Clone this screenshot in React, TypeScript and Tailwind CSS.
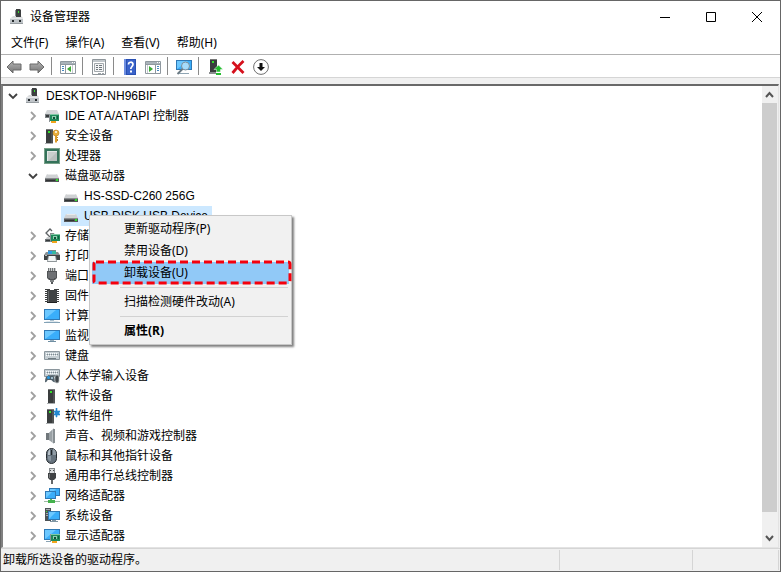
import type { ReactNode } from "react";

const S = ({ children, size = 16 }: { children: ReactNode; size?: number }) => (
  <svg width={size} height={size} viewBox="0 0 16 16" fill="none" aria-hidden="true" className="shrink-0">
    {children}
  </svg>
);

/* ---------- shared drawing parts ---------- */

const Card = ({ x, y }: { x: number; y: number }) => (
  <g transform={`translate(${x} ${y})`}>
    <path d="M0 0h1v8H0z" fill="#8b9396" />
    <path d="M1 0h9v7H1z" fill="#1f8a5b" />
    <path d="M1 0h9v1H1z" fill="#7fc9a4" />
    <path d="M3 2h4v3H3z" fill="#8fcfb0" />
    <path d="M4 3h2v2H4z" fill="#0f4f36" />
    <path d="M8 2h1v3H8z" fill="#0f5f40" />
    <path d="M2 7h5v2H2z" fill="#f0a51c" />
  </g>
);

const Screen = ({ x, y, w, h }: { x: number; y: number; w: number; h: number }) => (
  <g>
    <rect x={x} y={y} width={w} height={h} fill="#2f79b5" />
    <rect x={x + 1} y={y + 1} width={w - 2} height={h - 2} fill="#3aaefa" />
    <path d={`M${x + 1} ${y + h - 1}L${x + w - 4} ${y + 1}H${x + 1}z`} fill="#6cc8ff" />
  </g>
);

const Tower = ({ x, y, h = 14 }: { x: number; y: number; h?: number }) => (
  <g>
    <rect x={x} y={y} width="7" height={h} fill="#3a3d3e" />
    <rect x={x} y={y} width="7" height="1" fill="#77797a" />
    <rect x={x + 5} y={y + 1} width="2" height={h - 1} fill="#505354" />
    <rect x={x + 2} y={y + 2} width="2" height="2" fill="#35e02b" />
    <rect x={x - 1} y={y + h} width="8" height="1" fill="#aaaeb0" />
  </g>
);

const Keys = ({ y, h }: { y: number; h: number }) => (
  <g>
    <rect x="0" y={y} width="16" height={h} rx="1" fill="#8b969d" />
    <rect x="1" y={y + 1} width="14" height={h - 2} fill="#c5ced3" />
    <path
      d={`M2 ${y + 2.5}h12M2 ${y + 4.5}h12`}
      stroke="#f8fafb"
      strokeWidth="1"
      strokeDasharray="1 1"
    />
    <path d={`M3 ${y + 3.5}h11`} stroke="#7c888f" strokeWidth="1" strokeDasharray="1 1" />
    <path d={`M4 ${y + h - 1.5}h8`} stroke="#6f7b82" strokeWidth="1" />
  </g>
);

/* ---------- device icons ---------- */

const ComputerRoot = () => (
  <S>
    <path d="M7 0h4l1 1v8H7z" fill="#3c3f40" />
    <path d="M6 1h1v8H6z" fill="#8e9293" />
    <path d="M9 2h1v2H9z" fill="#36e22b" />
    <path d="M2 9l2-2h8l2 2z" fill="#dadcdd" />
    <path d="M7 1h5v7H7z" fill="#3c3f40" />
    <path d="M9 2h1v2H9z" fill="#36e22b" />
    <path d="M1 9h13v6H1z" fill="#bfc4c8" />
    <path d="M1 9h13v1H1z" fill="#e6e8ea" />
    <path d="M3 11h2v2H3zM10 11h2v2h-2z" fill="#24292c" />
    <path d="M1 14h13v1H1z" fill="#979da1" />
  </S>
);

const IdeIcon = () => (
  <S>
    <path d="M3 2h10l2 4H1z" fill="#d3d6d8" />
    <path d="M1 6h14v4H1z" fill="#7c8285" />
    <path d="M2 7h4v2H2z" fill="#363a3c" />
    <Card x={5} y={6} />
  </S>
);

const SecurityIcon = () => (
  <S>
    <Tower x={2} y={1} h={14} />
    <circle cx="12" cy="5" r="3" fill="#e9ae3c" stroke="#b87e1d" strokeWidth=".6" />
    <circle cx="12" cy="4" r="1" fill="#fff" />
    <path d="M11 7h2v7l-1 1-1-1z" fill="#dd9d29" />
    <path d="M13 9h1v1h-1zM13 11h1v2h-1z" fill="#b87e1d" />
  </S>
);

const CpuIcon = () => (
  <S>
    <path d="M0 0h16v16H0z" fill="#34725a" />
    <path d="M.5.5h15v15H.5z" stroke="#b9cfb4" strokeDasharray="1 1" />
    <path d="M3 3h10v10H3z" fill="#e3e7e6" />
    <path d="M4 4h9v9H4z" fill="#c9cfcd" />
    <path d="M4 13L13 4v9z" fill="#b9c0be" />
  </S>
);

const DiskIcon = () => (
  <S>
    <path d="M3 6h10l2 4H1z" fill="#cfd1d3" />
    <path d="M4 6h8l1 1H3z" fill="#e8e9ea" />
    <path d="M1 10h14v4H1z" fill="#55585a" />
    <path d="M1 10h14v1H1z" fill="#888b8d" />
    <path d="M2 12h9v1H2z" fill="#303233" />
    <path d="M12 11h2v2h-2z" fill="#30dd2b" />
  </S>
);

const StorageIcon = () => (
  <S>
    <path d="M8 3L6 1 2 5l4 4 3-3H6" stroke="#5d6265" strokeWidth="1.300" />
    <path d="M3 9h5l2 3H1z" fill="#c9cccd" />
    <path d="M1 11h7v3H1z" fill="#6d7275" />
    <path d="M2 12h4v1H2z" fill="#35393b" />
    <Card x={6} y={6} />
  </S>
);

const PrinterIcon = () => (
  <S>
    <path d="M4 2h8v2H4z" fill="#7d8487" />
    <path d="M2 4h12l2 3H0z" fill="#8a9093" />
    <path d="M4 3h4v3H4z" fill="#2d9be6" />
    <path d="M8 3h4v3H8z" fill="#35b9a0" />
    <path d="M0 7h16v5H0z" fill="#3f4345" />
    <path d="M1 7h2v1H1z" fill="#b9bec0" />
    <path d="M4 8h8l1 6H3z" fill="#8f9699" />
    <path d="M5 8h6l1 5H4z" fill="#f2f5f6" />
  </S>
);

const PortIcon = () => (
  <S>
    <path d="M4 0h8v3H4z" fill="#c9cccd" />
    <path d="M4.500 0v3M6.500 0v3M8.500 0v3M10.500 0v3" stroke="#6f7375" />
    <path d="M3 3h10v7l-2 2H5l-2-2z" fill="#505355" />
    <path d="M5 4v6M7 4v7M9 4v7M11 4v6" stroke="#9da0a2" strokeWidth=".8" />
    <path d="M6 12h4v2H6z" fill="#7f8385" />
    <path d="M7 14h2v2H7z" fill="#55585a" />
  </S>
);

const FirmwareIcon = () => (
  <S>
    <path d="M3 1h3v1h4V1h3v14H3z" fill="#404243" />
    <path d="M2 1v14M14 1v14" stroke="#3d3f40" strokeWidth="2" strokeDasharray="1 1" />
    <path d="M4 3h1v11H4z" fill="#66696b" />
    <path d="M3 14h10v1H3z" fill="#1f2121" />
  </S>
);

const ComputersIcon = () => (
  <S>
    <Screen x={0} y={1} w={16} h={11} />
    <path d="M6 12h4v1H6z" fill="#abc1cf" />
    <path d="M1 14l2-1h10l2 1z" fill="#dce6ec" />
    <path d="M0 14h16v1H0z" fill="#83a2b6" />
  </S>
);

const MonitorIcon = () => (
  <S>
    <Screen x={0} y={2} w={16} h={10} />
    <path d="M6 12h4v1H6z" fill="#9db2bf" />
    <path d="M4 13h8v1H4z" fill="#6f8ea2" />
  </S>
);

const KeyboardIcon = () => (
  <S>
    <Keys y={3} h={9} />
  </S>
);

const HidIcon = () => (
  <S>
    <Keys y={1} h={8} />
    <path d="M1 14c0-5 2-7 4-6h2c3-1 4 2 4 6-2 1-3-2-4-2H4c-1 0-1 3-3 2z" fill="#51616b" />
    <circle cx="4.500" cy="9.500" r="1.500" fill="#2697e0" />
    <circle cx="8" cy="10" r="1" fill="#b9d8e8" />
    <rect x="11" y="7" width="4" height="8" rx="2" fill="#3f464a" stroke="#b3b9bc" strokeWidth=".7" />
  </S>
);

const SoftwareIcon = () => (
  <S>
    <Tower x={4} y={1} h={14} />
  </S>
);

const ComponentIcon = () => (
  <S>
    <Tower x={3} y={1} h={14} />
    <path d="M10 3h2V0h1v3h3v1h-1v2h1v1h-3v2h-1V7h-2V6h1V4h-1z" fill="#2388d1" stroke="#2388d1" strokeWidth=".6" />
  </S>
);

const SoundIcon = () => (
  <S>
    <path d="M2 5h3v7H2z" fill="#70777b" />
    <path d="M5 5l5-5v16l-5-4z" fill="#b8bec2" />
    <path d="M5 5l3-3v12l-3-2z" fill="#9aa1a5" />
    <path d="M9 1h2v14H9z" fill="#878e92" />
  </S>
);

const MouseIcon = () => (
  <S>
    <rect x="2.500" y=".5" width="10" height="15" rx="5" fill="#66727d" stroke="#252b30" />
    <path d="M4 5c0-2 1-3 2-4v6H4z" fill="#b6c0c8" />
    <path d="M9 1c2 0 3 2 3 6H9z" fill="#929da6" />
    <path d="M7 2h1v5H7z" fill="#20262a" />
    <path d="M4 8h3v5c-2 0-3-1-3-3z" fill="#8995a0" />
  </S>
);

const UsbIcon = () => (
  <S>
    <path d="M5 0h6v5H5z" fill="#858a8d" />
    <path d="M6 1h4v4H6z" fill="#d9dcdd" />
    <path d="M6 2h1v1H6zM9 2h1v1H9z" fill="#494d4f" />
    <path d="M4 5h8v5l-2 2H6l-2-2z" fill="#3f4244" />
    <path d="M5 6h1v4H5z" fill="#77797b" />
    <path d="M7 12h2v4H7z" fill="#66696b" />
  </S>
);

const NetworkIcon = () => (
  <S>
    <Screen x={5} y={0} w={11} h={8} />
    <path d="M0 3h12v8H0z" fill="#fff" />
    <Screen x={1} y={3} w={11} h={8} />
    <path d="M6 11h2v2H6z" fill="#5cb861" />
    <path d="M0 13h16v1H0z" fill="#9fb9a5" />
    <path d="M4 12h7v3H4z" fill="#44b24c" />
  </S>
);

const SystemIcon = () => (
  <S>
    <path d="M1 0h6v13H1z" fill="#4d5357" />
    <path d="M2 1h4v1H2zM2 5h3v1H2zM2 7h3v1H2z" fill="#a3a9ad" />
    <path d="M2 3h1v1H2z" fill="#37df2d" />
    <Screen x={4} y={3} w={12} h={9} />
    <path d="M8 12h4v1H8zM6 13h8v1H6z" fill="#8097a5" />
  </S>
);

const AdapterIcon = () => (
  <S>
    <Screen x={0} y={1} w={16} h={11} />
    <path d="M2 13h4v1H2z" fill="#8aa3b3" />
    <Card x={6} y={6} />
  </S>
);

/* ---------- toolbar icons ---------- */

const arrow = "M1 8l6-6v3h8v6H7v3z";
const BackIcon = () => (
  <S>
    <defs>
      <linearGradient id="grey" x1="0" y1="0" x2="0" y2="1">
        <stop offset="0" stopColor="#b5b5b5" />
        <stop offset="1" stopColor="#747474" />
      </linearGradient>
    </defs>
    <path d={arrow} fill="url(#grey)" stroke="#6a6a6a" />
  </S>
);
const ForwardIcon = () => (
  <S>
    <path d={arrow} transform="matrix(-1 0 0 1 16 0)" fill="url(#grey)" stroke="#6a6a6a" />
  </S>
);
const Pane = ({ left }: { left?: boolean }) => (
  <g>
    <path d="M.5 2.500h15v12H.5z" fill="#fff" stroke="#8f989f" />
    <path d="M1 3h14v2H1z" fill="#aab3ba" />
    <path d="M12 3h1v1h-1zM14 3h1v1h-1z" fill="#fff" />
    <path d="M1 5.500h14" stroke="#8f989f" />
    {left ? (
      <>
        <path d="M5.500 6v8" stroke="#8f989f" />
        <path d="M2 7.500h2M2 9.500h2M2 11.500h2" stroke="#4687c0" />
        <path d="M11 7v6L7 10z" fill="#3ba935" />
        <path d="M12.500 6v8" stroke="#c5cbd0" />
      </>
    ) : (
      <>
        <path d="M10.500 6v8" stroke="#8f989f" />
        <path d="M12 7.500h2M12 9.500h2M12 11.500h2" stroke="#4687c0" />
        <path d="M4 7v6l4-3z" fill="#3ba935" />
        <path d="M2.500 6v8" stroke="#c5cbd0" />
      </>
    )}
  </g>
);
const TreePaneIcon = () => (
  <S>
    <Pane left />
  </S>
);
const ActionPaneIcon = () => (
  <S>
    <Pane />
  </S>
);
const PropertiesIcon = () => (
  <S>
    <path d="M1.500.5h13v15h-13z" fill="#fff" stroke="#8e959a" />
    <path d="M2 1h12v2H2z" fill="#c1c7cb" />
    <path d="M3.500 4.500h9v8h-9z" fill="#f4f5f6" stroke="#a3a9ad" />
    <path d="M5 6.500h2M8 6.500h3M5 8.500h2M8 8.500h3M5 10.500h2M8 10.500h3" stroke="#6f777c" />
    <path d="M7 14h3v1H7zM11 14h2v1h-2z" fill="#9da4a9" />
  </S>
);
const HelpIcon = () => (
  <S>
    <path d="M2 0h12v16H2z" fill="#2950b3" />
    <path d="M2 0h2v16H2z" fill="#6f8fe0" />
    <path d="M5 1h8v14H5z" fill="#3a63ca" />
    <path d="M6.500 5.500C6.500 2.500 11 2.500 11 5.300 11 7.500 8.800 7.500 8.800 10" stroke="#fff" strokeWidth="1.700" />
    <path d="M8 11.500h2v2H8z" fill="#fff" />
  </S>
);
const ScanIcon = () => (
  <S>
    <Screen x={0} y={1} w={16} h={10} />
    <path d="M2 14h11v1H2z" fill="#8fa5b3" />
    <circle cx="9.500" cy="7" r="4" fill="#bfe6fb" fillOpacity=".8" stroke="#7d8f9b" />
    <path d="M6.500 10L1.500 15" stroke="#6b7a84" strokeWidth="1.800" />
  </S>
);
const UpdateIcon = () => (
  <S>
    <path d="M3 0h7v13H3z" fill="#3a3d3e" />
    <path d="M3 0h7v1H3z" fill="#777" />
    <path d="M5 2h2v2H5z" fill="#35e02b" />
    <path d="M2 13h7v2H2z" fill="#8b8e90" />
    <path d="M11.500 6L16 10.500h-2.500V13h-4v-2.500H7z" fill="#23bd2e" stroke="#fff" strokeWidth=".5" />
    <path d="M9 14h5v2H9z" fill="#23bd2e" />
  </S>
);
const RemoveIcon = () => (
  <S>
    <path d="M2.500 3c3 3 7 7 11 11M13.500 2C9 6 6 10 2.500 14" stroke="#d5101c" strokeWidth="2.800" />
  </S>
);
const DisableIcon = () => (
  <S>
    <circle cx="8" cy="8" r="7.400" fill="#fff" stroke="#6f6f6f" />
    <path d="M6.500 4h3v4H12l-4 4-4-4h2.500z" fill="#111" />
  </S>
);

/* ---------- data ---------- */

type Device = { name: string; icon: () => ReactNode; children?: string[] };

const devices: Device[] = [
  { name: "IDE ATA/ATAPI 控制器", icon: IdeIcon },
  { name: "安全设备", icon: SecurityIcon },
  { name: "处理器", icon: CpuIcon },
  { name: "磁盘驱动器", icon: DiskIcon, children: ["HS-SSD-C260 256G", "USB DISK USB Device"] },
  { name: "存储控制器", icon: StorageIcon },
  { name: "打印队列", icon: PrinterIcon },
  { name: "端口", icon: PortIcon },
  { name: "固件", icon: FirmwareIcon },
  { name: "计算机", icon: ComputersIcon },
  { name: "监视器", icon: MonitorIcon },
  { name: "键盘", icon: KeyboardIcon },
  { name: "人体学输入设备", icon: HidIcon },
  { name: "软件设备", icon: SoftwareIcon },
  { name: "软件组件", icon: ComponentIcon },
  { name: "声音、视频和游戏控制器", icon: SoundIcon },
  { name: "鼠标和其他指针设备", icon: MouseIcon },
  { name: "通用串行总线控制器", icon: UsbIcon },
  { name: "网络适配器", icon: NetworkIcon },
  { name: "系统设备", icon: SystemIcon },
  { name: "显示适配器", icon: AdapterIcon },
];

const tools: ({ label: string; icon: () => ReactNode } | null)[] = [
  { label: "后退", icon: BackIcon },
  { label: "前进", icon: ForwardIcon },
  null,
  { label: "显示/隐藏控制台树", icon: TreePaneIcon },
  null,
  { label: "属性", icon: PropertiesIcon },
  null,
  { label: "帮助", icon: HelpIcon },
  { label: "显示/隐藏操作窗格", icon: ActionPaneIcon },
  null,
  { label: "扫描检测硬件改动", icon: ScanIcon },
  null,
  { label: "更新驱动程序", icon: UpdateIcon },
  { label: "卸载设备", icon: RemoveIcon },
  { label: "禁用设备", icon: DisableIcon },
];

/* ---------- pieces ---------- */

const Chevron = ({ open }: { open?: boolean }) => (
  <button type="button" aria-label={open ? "折叠" : "展开"} className="flex h-5 w-4 shrink-0 items-center justify-center">
    <svg width="10" height="10" viewBox="0 0 10 10" fill="none">
      {open ? (
        <path d="M1 3l4 4 4-4" stroke="#404040" strokeWidth="1.800" />
      ) : (
        <path d="M3 1l4 4-4 4" stroke="#a0a0a0" strokeWidth="1.800" />
      )}
    </svg>
  </button>
);

const MenuItem = ({ children, className = "" }: { children: ReactNode; className?: string }) => (
  <button type="button" role="menuitem" className={`flex h-[22px] w-full items-center pl-8 text-left ${className}`}>
    {children}
  </button>
);

const ContextMenu = () => (
  <div
    role="menu"
    className="absolute top-[9px] left-7 z-10 w-[203px] border border-[#c8c8c8] bg-[#f1f1f1] p-[2px] font-['Noto_Sans','Noto_Sans_CJK_SC',sans-serif] shadow-[2px_2px_2px_rgba(0,0,0,0.5)]"
  >
    <MenuItem>更新驱动程序(P)</MenuItem>
    <MenuItem>禁用设备(D)</MenuItem>
    <div className="relative bg-[#91c9f7]">
      <MenuItem>卸载设备(U)</MenuItem>
      <svg className="pointer-events-none absolute inset-0 h-full w-full overflow-visible" aria-hidden="true">
        <rect
          x="2"
          y="0"
          width="196"
          height="21"
          rx="2"
          fill="none"
          stroke="#f5000c"
          strokeWidth="3"
          strokeDasharray="8 4"
        />
      </svg>
    </div>
    <hr className="my-[3px] mr-[1px] ml-7 border-[#d2d2d2]" />
    <MenuItem>扫描检测硬件改动(A)</MenuItem>
    <hr className="my-[3px] mr-[1px] ml-7 border-[#d2d2d2]" />
    <MenuItem className="font-bold">属性(R)</MenuItem>
  </div>
);

const ScrollArrow = ({ down }: { down?: boolean }) => (
  <button type="button" aria-label={down ? "向下滚动" : "向上滚动"} className="flex h-[17px] w-full items-center justify-center">
    <svg width="9" height="7" viewBox="0 0 9 7" fill="none">
      <path d={down ? "M1 1l3.500 4L8 1" : "M1 6l3.500-4L8 6"} stroke="#555" strokeWidth="2" />
    </svg>
  </button>
);

export default function App() {
  return (
    <div className="flex h-screen flex-col overflow-hidden border border-[#666] bg-white font-['Noto_Sans','Noto_Sans_CJK_SC',sans-serif] text-xs text-black">
      <header className="flex h-[31px] shrink-0 items-center">
        <div className="flex flex-1 items-center gap-[5px] pl-2">
          <ComputerRoot />
          <h1>设备管理器</h1>
        </div>
        <button type="button" aria-label="最小化" className="flex h-7 w-[46px] items-center justify-center">
          <svg width="10" height="10" viewBox="0 0 10 10">
            <path d="M0 5.500h10" stroke="#000" />
          </svg>
        </button>
        <button type="button" aria-label="最大化" className="flex h-7 w-[46px] items-center justify-center">
          <svg width="10" height="10" viewBox="0 0 10 10">
            <path d="M.5.5h9v9h-9z" fill="none" stroke="#000" />
          </svg>
        </button>
        <button type="button" aria-label="关闭" className="flex h-7 w-[46px] items-center justify-center">
          <svg width="10" height="10" viewBox="0 0 10 10">
            <path d="M0 0l10 10M10 0L0 10" stroke="#000" />
          </svg>
        </button>
      </header>

      <nav className="flex h-[23px] shrink-0 items-center gap-[17px] border-b border-[#b0b0b0] pl-[10px]">
        {["文件(F)", "操作(A)", "查看(V)", "帮助(H)"].map((m) => (
          <button key={m} type="button">
            {m}
          </button>
        ))}
      </nav>

      <div role="toolbar" className="flex h-[23px] shrink-0 items-center border-b border-[#d5d5d5] pl-[1px]">
        {tools.map((t, i) =>
          t ? (
            <button key={i} type="button" aria-label={t.label} className="flex h-full w-[23px] items-center justify-center pt-[2px]">
              <t.icon />
            </button>
          ) : (
            <span key={i} className="mr-1 ml-[3px] h-[18px] w-px bg-[#8a8a8a]" />
          ),
        )}
      </div>

      <div className="flex min-h-0 flex-1 flex-col bg-[#f0f0f0] pt-[6px] pr-[1px]">
        <main className="flex min-h-0 flex-1 border-t-2 border-r border-b border-l-2 border-t-[#696969] border-r-[#e3e3e3] border-b-[#e3e3e3] border-l-[#808080] bg-white">
          <ul
            role="tree"
            className="min-w-0 flex-1 pl-[2px] font-['Liberation_Sans','Noto_Sans_CJK_SC',sans-serif] [font-kerning:none]"
          >
            <li role="treeitem" aria-expanded="true">
              <div className="flex h-5 items-center">
                <Chevron open />
                <span className="mr-[5px] ml-1">
                  <ComputerRoot />
                </span>
                DESKTOP-NH96BIF
              </div>
              <ul role="group" className="pl-5">
                {devices.map((d) => (
                  <li key={d.name} role="treeitem">
                    <div className="flex h-5 items-center whitespace-nowrap">
                      <Chevron open={!!d.children} />
                      <span className="mr-[5px] ml-[3px]">
                        <d.icon />
                      </span>
                      {d.name}
                    </div>
                    {d.children && (
                      <ul role="group" className="pl-9">
                        {d.children.map((c, i) => (
                          <li key={c} role="treeitem" className="flex">
                            <div
                              className={`relative flex h-5 items-center gap-[5px] pr-1 pl-[2px] whitespace-nowrap ${i === 1 ? "bg-[#cce8ff]" : ""}`}
                            >
                              <DiskIcon />
                              {c}
                              {i === 1 && <ContextMenu />}
                            </div>
                          </li>
                        ))}
                      </ul>
                    )}
                  </li>
                ))}
              </ul>
            </li>
          </ul>
          <div className="flex w-4 shrink-0 flex-col bg-[#f0f0f0] pr-[1px]">
            <ScrollArrow />
            <div className="flex flex-1 flex-col pb-[18px]">
              <div className="flex-1 bg-[#cdcdcd]" />
            </div>
            <ScrollArrow down />
          </div>
        </main>
      </div>

      <footer className="flex h-[23px] shrink-0 items-stretch border-t border-[#d5d5d5] bg-[#f0f0f0] pt-[1px] pr-[1px] pb-[1px]">
        <p className="flex flex-1 items-center border-r border-[#d5d5d5] pl-[2px]">卸载所选设备的驱动程序。</p>
        <span className="w-[133px] border-r border-[#d5d5d5]" />
        <span className="w-[86px] border-r border-[#d5d5d5]" />
      </footer>
    </div>
  );
}
